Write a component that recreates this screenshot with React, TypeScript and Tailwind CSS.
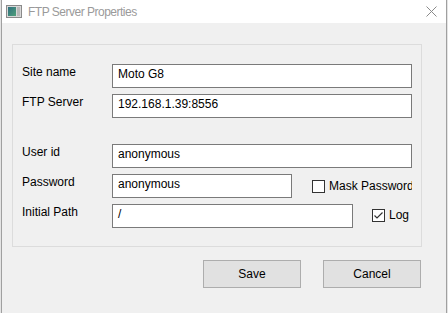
function Field({ label, value, width }: { label: string; value: string; width: string }) {
  return (
    <div className="flex items-start h-[24px]">
      <div className="w-[90px] pt-[1px] leading-[14px]">{label}</div>
      <div className={`${width} h-[24px] bg-white border border-[#7a7a7a] pl-[5px] pt-[2px] leading-[14px] whitespace-nowrap overflow-hidden`}>
        {value}
      </div>
    </div>
  )
}

function Check({ label, checked, width }: { label: string; checked?: boolean; width: string }) {
  return (
    <div className={`${width} flex items-center overflow-hidden whitespace-nowrap h-[14px]`}>
      <div className="w-[13px] h-[13px] shrink-0 bg-white border border-[#333333] flex items-center justify-center">
        {checked && (
          <svg width="11" height="11" viewBox="0 0 11 11">
            <path d="M1.5 5.5 L4 8 L9.5 2.5" fill="none" stroke="#333333" strokeWidth="1.2" />
          </svg>
        )}
      </div>
      <span className="ml-[4px] leading-[14px]">{label}</span>
    </div>
  )
}

export default function App() {
  return (
    <div
      className="w-[448px] h-[313px] bg-[#e4e4e4] overflow-hidden text-[12px] text-black"
      style={{ fontFamily: '"Liberation Sans", Arial, sans-serif' }}
    >
      <div className="ml-[1px] w-[446px] h-full border-x border-[#a0a0a0] bg-[#f0f0f0] flex flex-col">
        {/* Title bar */}
        <div className="h-[23px] bg-white flex items-center relative shrink-0">
          <svg className="ml-[4px]" width="16" height="13" viewBox="0 0 16 13">
            <defs>
              <linearGradient id="g" x1="0" y1="0" x2="1" y2="1">
                <stop offset="0" stopColor="#2f6f7f" />
                <stop offset="1" stopColor="#4fa07a" />
              </linearGradient>
            </defs>
            <rect x="0.5" y="0.5" width="15" height="12" fill="#d8d8d8" stroke="#8a8a8a" />
            <rect x="2" y="2" width="8" height="9" fill="url(#g)" />
            <rect x="11" y="2" width="3" height="9" fill="#b8b8b8" />
          </svg>
          <span className="ml-[6px] text-[#9a9a9a] tracking-[-0.5px] leading-[14px]">FTP Server Properties</span>
          <svg className="absolute left-[424px] top-[6px]" width="11" height="11" viewBox="0 0 11 11">
            <path d="M0.5 0.5 L10.5 10.5 M10.5 0.5 L0.5 10.5" stroke="#8a8a8a" strokeWidth="1" />
          </svg>
        </div>

        {/* Body */}
        <div className="ml-[10px] mt-[21px] w-[410px] h-[203px] border border-[#dcdcdc] pl-[9px] pt-[19px] flex flex-col">
          <Field label="Site name" value="Moto G8" width="w-[300px]" />
          <div className="mt-[6px]">
            <Field label="FTP Server" value="192.168.1.39:8556" width="w-[300px]" />
          </div>
          <div className="mt-[26px]">
            <Field label="User id" value="anonymous" width="w-[300px]" />
          </div>
          <div className="mt-[6px] flex items-center">
            <Field label="Password" value="anonymous" width="w-[180px]" />
            <div className="ml-[20px]">
              <Check label="Mask Password" width="w-[100px]" />
            </div>
          </div>
          <div className="mt-[6px] flex items-center">
            <Field label="Initial Path" value="/" width="w-[241px]" />
            <div className="ml-[19px] -mt-[2px]">
              <Check label="Log" checked width="w-[40px]" />
            </div>
          </div>
        </div>

        {/* Buttons */}
        <div className="ml-[10px] mt-[13px] w-[410px] pr-[1px] flex justify-end gap-[22px]">
          <button className="w-[98px] h-[28px] bg-[#e1e1e1] border border-[#adadad] text-[12px] leading-[14px]">Save</button>
          <button className="w-[98px] h-[28px] bg-[#e1e1e1] border border-[#adadad] text-[12px] leading-[14px]">Cancel</button>
        </div>
      </div>
    </div>
  )
}
